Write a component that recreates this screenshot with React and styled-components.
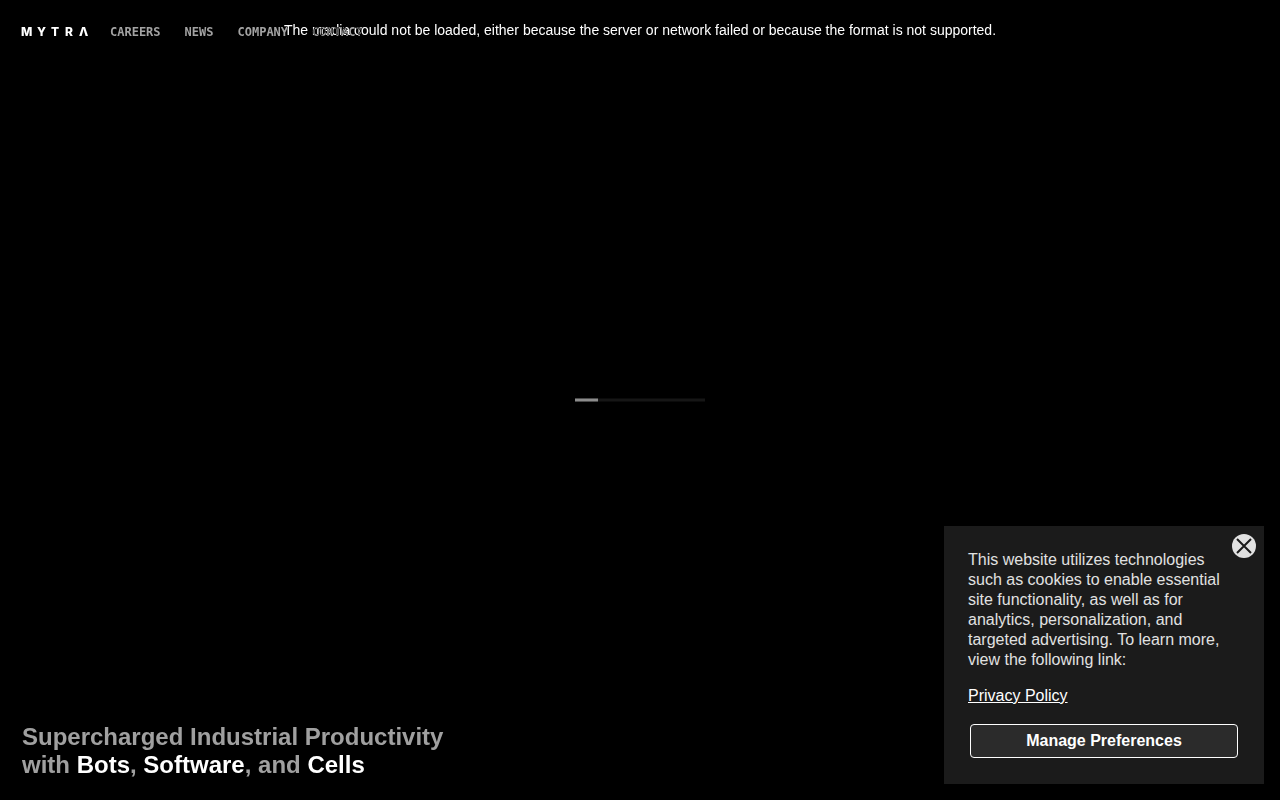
import React from 'react';
import styled, { createGlobalStyle } from 'styled-components';

const navLinks = ['Careers', 'News', 'Company', 'Contact'];

const App = () => {
  return (
    <>
      <GlobalStyle />
      <Page>
        <Header>
          <a href='/' aria-label='Mytra'>
            <Logo />
          </a>
          <Nav>
            {navLinks.map((name) => (
              <NavLink key={name} href={`/${name.toLowerCase()}`}>
                {name}
              </NavLink>
            ))}
          </Nav>
        </Header>
        <VideoError>
          The media could not be loaded, either because the server or network failed or because the format is not
          supported.
        </VideoError>
        <Loader>
          <LoaderBar />
        </Loader>
        <Title>
          Supercharged Industrial Productivity
          <br />
          with <strong>Bots</strong>, <strong>Software</strong>, and <strong>Cells</strong>
        </Title>
        <CookieBanner />
      </Page>
    </>
  );
};

const Logo = () => (
  <svg width='66' height='10' viewBox='0 0 66 10' fill='#fff' overflow='visible'>
    <text x='-1 15 29 43 57' y='9' fontFamily='Inter, sans-serif' fontSize='12' fontWeight='800'>
      MYTRΛ
    </text>
  </svg>
);

const CookieBanner = () => {
  const [open, setOpen] = React.useState(true);
  if (!open) return null;

  return (
    <Banner role='dialog' aria-label='Cookies'>
      <CloseButton type='button' aria-label='Close' onClick={() => setOpen(false)}>
        <svg width='24' height='24' viewBox='0 0 24 24' fill='none' stroke='#1b1b1b' strokeWidth='2'>
          <path d='M5 5L19 19M19 5L5 19' />
        </svg>
      </CloseButton>
      <p>
        This website utilizes technologies such as cookies to enable essential site functionality, as well as for
        analytics, personalization, and targeted advertising. To learn more, view the following link:
      </p>
      <PolicyLink href='/privacy'>Privacy Policy</PolicyLink>
      <PreferencesButton type='button'>Manage Preferences</PreferencesButton>
    </Banner>
  );
};

const GlobalStyle = createGlobalStyle`
  * {
    box-sizing: border-box;
    margin: 0;
  }
  body {
    background: #000;
    color: #fff;
    font-family: 'Liberation Sans', Arial, sans-serif;
  }
`;

const Page = styled.main`
  position: relative;
  display: flex;
  flex-direction: column;
  min-height: 100vh;
  background: #000;
`;

const Header = styled.header`
  position: absolute;
  top: 0;
  left: 0;
  z-index: 1;
  display: flex;
  align-items: center;
  gap: 22px;
  padding: 24px 22px;
  mix-blend-mode: difference;
  a {
    display: flex;
  }
`;

const Nav = styled.nav`
  display: flex;
  gap: 24px;
`;

const NavLink = styled.a`
  color: #a3a3a3;
  font: bold 12px/16px 'DejaVu Sans Mono', monospace;
  text-transform: uppercase;
  text-decoration: none;
`;

const VideoError = styled.p`
  padding-top: 20px;
  font-size: 14px;
  line-height: 20px;
  text-align: center;
`;

// Sits in the middle of the screen, over the video
const Loader = styled.div`
  position: absolute;
  top: 50%;
  left: 50%;
  width: 130px;
  height: 3px;
  transform: translate(-50%, -50%);
  background: #161616;
`;

const LoaderBar = styled.div`
  width: 18%;
  height: 100%;
  background: #8c8c8c;
`;

const Title = styled.h1`
  margin-top: auto;
  padding: 0 22px 21px;
  color: #a0a0a0;
  font-size: 24px;
  font-weight: 600;
  line-height: 28px;
  strong {
    color: #fff;
    font-weight: inherit;
  }
`;

const Banner = styled.section`
  position: fixed;
  right: 16px;
  bottom: 16px;
  z-index: 2;
  display: flex;
  flex-direction: column;
  gap: 16px;
  width: 320px;
  padding: 24px 24px 26px;
  background: #1b1b1b;
  color: #e1e1e1;
  font-size: 16px;
  line-height: 20px;
`;

const CloseButton = styled.button`
  position: absolute;
  top: 8px;
  right: 8px;
  width: 24px;
  height: 24px;
  padding: 0;
  border: 0;
  border-radius: 50%;
  background: #e1e1e1;
  cursor: pointer;
  svg {
    display: block;
  }
`;

const PolicyLink = styled.a`
  align-self: flex-start;
  color: #fff;
`;

const PreferencesButton = styled.button`
  height: 34px;
  margin: 2px 2px 0;
  border: 1px solid #fff;
  border-radius: 4px;
  background: #2b2b2b;
  color: #fff;
  font: bold 16px/20px 'Liberation Sans', Arial, sans-serif;
  cursor: pointer;
`;

export default App;
